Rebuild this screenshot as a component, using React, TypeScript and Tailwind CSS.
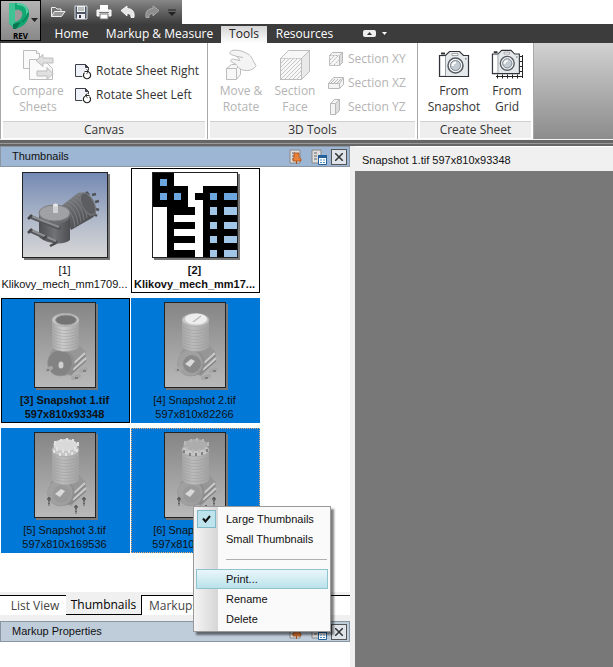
import type { ReactNode } from "react";
import { clsx } from "clsx";

const UI_FONT = "font-['Open_Sans',sans-serif]";
const MS_FONT = "font-['Liberation_Sans',sans-serif]";

/* ---------- Toolbar icons ---------- */

function AppLogo() {
  return (
    <svg width="24" height="28" viewBox="0 0 24 28" className="shrink-0">
      <path d="M2 1h8c8 0 13 5 12 12-1 8-7 13-15 14l-5-6z" fill="#12a873" />
      <path d="M2 1h6v19l-2 5-4-4z" fill="#3fc294" />
      <path d="M6 22l8-2-5 7H6z" fill="#08774f" />
      <path d="M10 2c8 0 11 4 10 11" fill="none" stroke="#55cfa2" strokeWidth="2" />
      <path d="M8 8c6-1 8 2 7 6-1 3-3 5-7 6z" fill="#9b9b9b" />
      <path d="M15 20c4-3 6-6 6-9" fill="none" stroke="#0a8a5d" strokeWidth="2" />
    </svg>
  );
}

function OpenIcon() {
  return (
    <svg width="16" height="14" viewBox="0 0 16 14" stroke="#eee" fill="none">
      <path d="M1.500 11.500v-9h4l1.500 1.500h4v2" fill="#777" />
      <path d="M1.500 11.500l3-5h10.500l-3.500 5z" fill="#999" />
    </svg>
  );
}

function SaveIcon() {
  return (
    <svg width="14" height="15" viewBox="0 0 14 15">
      <path d="M1 1h12v13H1z" fill="#4b5563" stroke="#d8dde2" strokeWidth="1" />
      <path d="M3 1h8v6H3z" fill="#eef0f2" />
      <path d="M4 3h6M4 5h6" stroke="#888" />
      <path d="M3 9h8v5H3z" fill="#eef0f2" />
      <path d="M5 10h2v3H5z" fill="#334" />
    </svg>
  );
}

function PrintIcon() {
  return (
    <svg width="16" height="15" viewBox="0 0 16 15">
      <path d="M4 0h8v5H4z" fill="#fff" />
      <path d="M1 5h14v6H1z" fill="#eee" stroke="#fff" />
      <path d="M3 7.500h10" stroke="#777" />
      <path d="M4 9h8v5H4z" fill="#fff" stroke="#777" />
    </svg>
  );
}

function UndoIcon({ redo = false }: { redo?: boolean }) {
  return (
    <svg width="16" height="14" viewBox="0 0 16 14" className={redo ? "-scale-x-100" : ""}>
      <path
        d="M1 5.500l6-4.500v2.500c5 0 8 3 7 9h-3c0-3-1-4-4-4V11z"
        fill={redo ? "#8d8d8d" : "#e6e6e6"}
        stroke={redo ? "#b5b5b5" : "#fff"}
        strokeWidth=".8"
      />
    </svg>
  );
}

/* ---------- Ribbon icons ---------- */

function CompareIcon() {
  return (
    <svg width="32" height="32" viewBox="0 0 32 32" stroke="#bdbdbd" fill="#fafafa">
      <path d="M1.500 1.500h13l3 3v15h-16z" />
      <path d="M7.500 10.500h14l9 9v11h-23z" />
      <path d="M14 11.500l7-6v3.500h10v5h-10v3.500z" fill="#e0e0e0" />
      <path d="M31 24.500l-6-6v3.500h-10v5h10v3.500z" fill="#e0e0e0" />
      <path d="M14.500 1.500v3h3" />
    </svg>
  );
}

function RotateIcon({ left = false }: { left?: boolean }) {
  return (
    <svg width="17" height="17" viewBox="0 0 17 17" fill="none">
      <path d="M.5 1.500h10l3 3v9h-13z" fill="#eef1f7" stroke="#3c4048" />
      <path d="M10.500 1.500v3h3z" fill="#444" stroke="#3c4048" />
      <circle cx="12" cy="12" r="5" fill="#fff" />
      <g transform={left ? "translate(24 0) scale(-1 1)" : undefined}>
        <path d="M9.500 9.600a3.600 3.600 0 1 0 4.600-.4" stroke="#222" strokeWidth="1.200" />
        <path d="M9.500 8.500h4M11.500 6.500l2.500 2-2.500 2.200" stroke="#222" />
      </g>
    </svg>
  );
}

function MoveRotateIcon() {
  return (
    <svg width="32" height="32" viewBox="0 0 32 32" stroke="#bdbdbd" fill="#f7f7f7">
      <path d="M1.500 19.500l5-4h9v10l-4 5h-10z" />
      <path d="M1.500 19.500h10v11M11.500 19.500l4-4" />
      <path
        d="M7 1.500c4-1 9 0 13 2 5 2 7 5 8 8l3 5c-2 4-6 5-10 5-5 0-8-3-10-6l-5-3c-1-2 1-3 4-2l5 1-3-4-6-2c-2-1-1-3 1-4z"
        fill="#f4f4f4"
      />
      <path d="M12 7.500l6 1" />
    </svg>
  );
}

function SectionFaceIcon() {
  return (
    <svg width="32" height="32" viewBox="0 0 32 32" stroke="#bdbdbd" fill="#f7f7f7">
      <defs>
        <pattern id="hatch" width="4" height="4" patternUnits="userSpaceOnUse">
          <path d="M-1 5l6-6M-1 1l2-2M3 5l2-2" stroke="#c2c2c2" strokeWidth=".9" />
        </pattern>
      </defs>
      <path d="M1.500 9.500l8-8h21v21l-8 8h-21z" />
      <path d="M22.500 9.500l8-8v21l-8 8z" fill="#e9e9e9" />
      <path d="M1.500 9.500h21v21h-21z" fill="url(#hatch)" strokeDasharray="2 1" />
    </svg>
  );
}

function SectionIcon({ plane }: { plane: string }) {
  return (
    <svg width="16" height="16" viewBox="0 0 16 16" stroke="#b8b8b8" fill="#f4f4f4">
      {plane === "XY" && (
        <>
          <path d="M1.500 4.500l3-3h10v10l-3 3h-10z" />
          <path d="M1.500 4.500h10v10h-10zM2 9l4-4M2 13l8-8M6 14l5-5" strokeDasharray="2 1" />
          <path d="M11.500 4.500l3-3v10l-3 3z" fill="#ddd" />
        </>
      )}
      {plane === "XZ" && (
        <>
          <path d="M.5 8.500l5-6h10v7l-4 4h-11z" />
          <path d="M.5 8.500h11v5M11.500 8.500l4-6M3 8l4-4M6 8l4-4M9 8l4-4" />
        </>
      )}
      {plane === "YZ" && (
        <>
          <path d="M2.500 4.500l4-4h5v11l-4 4h-5z" />
          <path d="M2.500 4.500h5v11M7.500 4.500l4-4M8 9l3-3M8 12l3-3" />
          <path d="M7.500 4.500l4-4v11l-4 4z" fill="#ddd" />
        </>
      )}
    </svg>
  );
}

function CameraIcon({ grid = false }: { grid?: boolean }) {
  return (
    <svg width="32" height="32" viewBox="0 0 32 32" fill="none">
      <g transform={grid ? "translate(0 -1) scale(.93)" : undefined}>
        <path d="M3 3.500h4v2H3z" fill="#333" />
        <path d="M1.500 6.500h6l4-4h10l4 4h5v21h-29z" fill="#e6e9ec" stroke="#30343a" strokeWidth="1.200" />
        <path d="M3 8h4v18H3z" fill="#fff" />
        <path d="M7.500 7v20" stroke="#9aa0a6" />
        <path d="M14 4.500h6v2h-6z" fill="#fff" stroke="#888" strokeWidth=".7" />
        <circle cx="17.500" cy="16.500" r="7.500" fill="#f5f6f7" stroke="#555b63" strokeWidth="1.500" />
        <circle cx="17.500" cy="16.500" r="5" fill="#c3ccd4" stroke="#7a828a" />
        <path d="M14.500 17a3.500 3.500 0 0 1 3.500-3.500" stroke="#fff" strokeWidth="2" />
        <path d="M27 9h1.500v1.500H27z" fill="#888" />
      </g>
      {grid && (
        <path
          d="M5 27.500h27M31.500 6v23M6.500 25.500v4M11.500 25.500v4M16.500 25.500v4M21.500 25.500v4M26.500 25.500v4M29 7.500h3M29 12.500h3M29 17.500h3M29 22.500h3"
          stroke="#222"
        />
      )}
    </svg>
  );
}

/* ---------- Dock header icons ---------- */

function PinIcon() {
  return (
    <svg width="14" height="16" viewBox="0 0 14 16">
      <path d="M1 1h10v13H1z" fill="#ddd" stroke="#888" />
      <path d="M3 4h3M3 7h2M3 10h2" stroke="#666" />
      <path d="M5 4h5v4l2 2v2H4v-2l1-2z" fill="#e8813a" stroke="#a84e18" strokeWidth=".8" />
      <path d="M7.500 12v3" stroke="#a84e18" />
    </svg>
  );
}

function ListIcon() {
  return (
    <svg width="16" height="16" viewBox="0 0 16 16">
      <path d="M1 1h9v13H1z" fill="#ddd" stroke="#888" />
      <path d="M3 4h3M3 7h3M3 10h3" stroke="#666" />
      <path d="M7.500 6.500h8v9h-8z" fill="#fff" stroke="#22619c" />
      <path d="M7 6h9v3H7z" fill="#22619c" />
      <path d="M9 11h2M9 13.500h2M12 11h2M12 13.500h2" stroke="#4d8cc4" />
    </svg>
  );
}

/* ---------- Thumbnail artwork ---------- */

function EngineArt() {
  return (
    <svg width="84" height="84" viewBox="0 0 84 84" className="block">
      <defs>
        <linearGradient id="sky" x1="0" y1="0" x2="0" y2="1">
          <stop offset="0" stopColor="#7489b3" />
          <stop offset=".6" stopColor="#b4bccb" />
          <stop offset="1" stopColor="#d6d6d6" />
        </linearGradient>
        <linearGradient id="barrel" x1="0" y1="0" x2=".6" y2="1">
          <stop offset="0" stopColor="#85878a" />
          <stop offset=".5" stopColor="#66686b" />
          <stop offset="1" stopColor="#494b4e" />
        </linearGradient>
        <linearGradient id="drum" x1="0" y1="0" x2="1" y2="0">
          <stop offset="0" stopColor="#4c4e51" />
          <stop offset=".5" stopColor="#707276" />
          <stop offset="1" stopColor="#4c4e51" />
        </linearGradient>
      </defs>
      <path d="M0 0h84v84H0z" fill="url(#sky)" />
      {/* finned barrel */}
      <path d="M63 19l3 3M69 22l4-1M72 29l4-1M73 36l3 1M71 41l3 2" stroke="#505255" strokeWidth="2.500" />
      <path d="M37 34l18-14c9-3 17 6 18 18 0 3-1 5-4 7l-21 12z" fill="url(#barrel)" />
      {[0, 3, 6, 9, 12, 15, 18].map((d) => (
        <path
          key={d}
          d={`M${39 + d} ${33 - d * 0.75}c7 2 12 10 13 21`}
          fill="none"
          stroke="#8f9194"
          strokeWidth=".6"
        />
      ))}
      <ellipse cx="65" cy="31" rx="6" ry="12" transform="rotate(-27 65 31)" fill="#5b5d60" stroke="#77797c" />
      {/* crank housing */}
      <path d="M16 41h31v26c-5 5-22 5-31-3z" fill="url(#drum)" />
      <ellipse cx="31.500" cy="43" rx="15.500" ry="8" fill="#6a6c6f" />
      <ellipse cx="31.500" cy="40" rx="15.500" ry="8" fill="#a0a1a4" stroke="#7b7d80" />
      <path d="M30 32h5v8h-5z" fill="#cfd0d2" />
      <ellipse cx="32.500" cy="32" rx="2.500" ry="1.500" fill="#e8e8e8" />
      {/* mounting arms */}
      <path d="M8 44l28 11M8 58l25 11" stroke="#54565a" strokeWidth="4" strokeLinecap="round" />
      <path d="M8 43l28 11M8 57l25 11" stroke="#8c8e91" strokeWidth="2" />
      <path d="M5 46l4-4M5 60l4-4M27 73l6-3M20 66l4-3" stroke="#46484b" strokeWidth="2.500" />
    </svg>
  );
}

function PlanArt() {
  return (
    <svg width="84" height="84" viewBox="0 0 84 84" className="block" shapeRendering="crispEdges">
      <path d="M0 0h84v84H0z" fill="#fff" />
      <path
        d="M0 0h21v34H0zM20 13h15v21H20zM14 34h28v8H14zM14 34h7v50h-7zM20 49h22v7H20zM20 63h22v7H20zM20 77h22v7H20zM42 20h8v7h-8zM50 13h34v71H50z"
        fill="#000"
      />
      <path d="M7 6h7v7H7zM7 20h7v7H7zM21 20h7v7h-7zM57 20h7v7h-7zM71 20h13v7H71z" fill="#6ca6df" />
      <path
        d="M57 34h7v8h-7zM71 34h13v8H71zM57 49h7v7h-7zM71 49h13v7H71zM57 63h7v7h-7zM71 63h13v7H71zM57 77h7v7h-7zM71 77h13v7H71z"
        fill="#a1c6e7"
      />
    </svg>
  );
}

type Top = "open" | "piston" | "exploded" | "bolted";

function PumpArt({ top }: { top: Top }) {
  const bolts = top === "exploded" || top === "bolted";
  return (
    <svg width="60" height="84" viewBox="0 0 60 84" className="block">
      <defs>
        <linearGradient id={`bg-${top}`} x1="0" y1="0" x2="0" y2="1">
          <stop offset="0" stopColor="#858585" />
          <stop offset="1" stopColor="#b9b9b9" />
        </linearGradient>
        <linearGradient id={`cyl-${top}`} x1="0" y1="0" x2="1" y2="0">
          <stop offset="0" stopColor="#a6a6a6" />
          <stop offset=".4" stopColor={top === "open" ? "#cdcdcd" : "#bcbcbc"} />
          <stop offset="1" stopColor="#a2a2a2" />
        </linearGradient>
      </defs>
      <path d="M0 0h60v84H0z" fill={`url(#bg-${top})`} />
      {/* crankcase */}
      <path d="M15 50l4-5 25-3 7 7v9L36 73l-10-4z" fill="#969696" />
      <path d="M37 62l13-12M38 67l13-12" stroke="#cbcbcb" strokeWidth="1.800" />
      <path d="M37 64.500l13-12M35 71l16-13" stroke="#7f7f7f" />
      <ellipse cx="27" cy="60" rx="12.500" ry="13" fill="#8d8d8d" />
      <ellipse cx="25" cy="60" rx="12.500" ry="13" fill={top === "open" ? "#838383" : "#a0a0a0"} stroke="#999" strokeWidth=".7" />
      {top === "open" ? (
        <ellipse cx="26" cy="62" rx="2.500" ry="3.500" fill="#cfcfcf" />
      ) : (
        <>
          <ellipse cx="27" cy="61" rx="9" ry="9" fill={bolts ? "#999" : "#8a8a8a"} />
          <path d="M20 61l6-5 4 2-5 6z" fill="#d9d9d9" />
        </>
      )}
      {/* cylinder */}
      <path d={`M17 ${bolts ? 20 : 17}h27v27c-4 6-23 6-27 0z`} fill={`url(#cyl-${top})`} />
      {[23, 26, 29, 32, 35, 38, 41, 44].map((y) => (
        <path key={y} d={`M17 ${y}c4 6 23 6 27 0`} fill="none" stroke="#9a9a9a" strokeWidth=".5" />
      ))}
      <ellipse cx="30.500" cy="17" rx="13.500" ry="6.500" fill="#c6c6c6" stroke="#adadad" />
      {top === "open" && <ellipse cx="31" cy="17" rx="10.500" ry="5" fill="#747474" stroke="#999" />}
      {top === "piston" && (
        <>
          <ellipse cx="31" cy="16" rx="11" ry="5.500" fill="#ededed" />
          <path d="M28 19l8-6" stroke="#bbb" strokeWidth="1.500" />
        </>
      )}
      {bolts && (
        <>
          <ellipse cx="30.500" cy="12" rx="12" ry="6" fill={top === "exploded" ? "#d9d9d9" : "#adadad"} />
          <path
            d="M20 8v4M26 6v3M32 5v3M38 6v3M43 9v4M22 14v4M28 16v4M34 16v4M40 14v4"
            stroke={top === "exploded" ? "#e2e2e2" : "#b8b8b8"}
            strokeWidth="2"
          />
          <path d="M19 17v3M25 20v3M31 20v3M37 19v3M42 16v3" stroke={top === "exploded" ? "#eee" : "#6e6e6e"} strokeWidth="1.500" />
          <path d="M14 64v9M41 72v9M49 64v9" stroke="#5a5a5a" strokeWidth="1.800" strokeDasharray="2 .8" />
          <path d="M12 66h4M39 74h4M47 66h4" stroke="#5a5a5a" strokeWidth="1.500" />
        </>
      )}
      {!bolts && (
        <>
          <path d="M12 67l4-2M38 75l6-2M46 68l5-2" stroke="#a6a6a6" strokeWidth="4" strokeLinecap="round" />
          <path d="M40 75h3M48 68h3M12 67h2" stroke="#555" />
        </>
      )}
    </svg>
  );
}

/* ---------- Ribbon ---------- */

type LargeButtonProps = { icon: ReactNode; lines: [string, string]; disabled?: boolean; className?: string };

function LargeButton({ icon, lines, disabled, className }: LargeButtonProps) {
  return (
    <button
      disabled={disabled}
      className={clsx(
        "flex flex-col items-center pt-1.5 leading-4",
        disabled ? "text-[#b4b4b4]" : "text-[#333]",
        className
      )}
    >
      {icon}
      <span className="mt-0.5">{lines[0]}</span>
      <span>{lines[1]}</span>
    </button>
  );
}

function RibbonPanel({ title, className, children }: { title: string; className?: string; children: ReactNode }) {
  return (
    <section className={clsx("flex h-24 flex-col border-r border-[#a8a8a8] bg-white", className)}>
      <div className="flex min-h-0 flex-1">{children}</div>
      <h2 className="mx-0.5 mb-px h-[17px] border-t border-[#d0d0d0] bg-[#eee] text-center leading-4 text-[#333]">
        {title}
      </h2>
    </section>
  );
}

function Ribbon() {
  return (
    <header className={clsx("text-xs", UI_FONT)}>
      <div className="relative">
        <div className="flex h-6 w-[182px] items-center gap-2 bg-linear-to-b from-[#888] to-[#3e3e3e] pl-[50px]">
          <button aria-label="Open"><OpenIcon /></button>
          <button aria-label="Save"><SaveIcon /></button>
          <button aria-label="Print"><PrintIcon /></button>
          <button aria-label="Undo"><UndoIcon /></button>
          <button aria-label="Redo"><UndoIcon redo /></button>
          <button aria-label="Customize">
            <svg width="8" height="7" viewBox="0 0 8 7">
              <path d="M0 1h8" stroke="#222" />
              <path d="M0 3h8L4 7z" fill="#222" />
            </svg>
          </button>
        </div>
        <button
          aria-label="Application menu"
          className="absolute top-0 left-0 flex h-[41px] w-[41px] flex-col border border-black bg-linear-to-b from-[#b4b4b4] to-[#888]"
        >
          <span className="flex h-[30px] items-center pl-1.5">
            <AppLogo />
            <svg width="7" height="4" viewBox="0 0 7 4" className="mt-2 shrink-0">
              <path d="M0 0h7L3.500 4z" fill="#222" />
            </svg>
          </span>
          <span className="w-full text-center text-[8px] leading-[9px] font-bold text-black">REV</span>
        </button>
        <nav className="flex h-[19px] items-stretch bg-[#3c3c3c] pl-[45px] leading-5 text-white">
          <a href="#home" className="w-[53px] text-center">Home</a>
          <a href="#markup" className="w-[123px] text-center">Markup &amp; Measure</a>
          <a href="#tools" className="mt-0.5 w-[46px] bg-linear-to-b from-[#d4d4d4] to-white text-center leading-4 text-[#222]">
            Tools
          </a>
          <a href="#resources" className="w-[75px] text-center">Resources</a>
          <button aria-label="Minimize ribbon" className="ml-[21px] flex items-center gap-1.5">
            <svg width="13" height="7" viewBox="0 0 13 7">
              <rect width="13" height="7" rx="2" fill="#eee" />
              <path d="M4 5l2.500-3L9 5z" fill="#333" />
            </svg>
            <svg width="5" height="3" viewBox="0 0 5 3"><path d="M0 0h5L2.500 3z" fill="#fff" /></svg>
          </button>
        </nav>
      </div>

      <div className="flex bg-linear-to-b from-[#d2d2d2] to-[#8c8c8c]">
        <RibbonPanel title="Canvas" className="w-[208px] border-l">
          <LargeButton disabled icon={<CompareIcon />} lines={["Compare", "Sheets"]} className="ml-1.5 w-[62px]" />
          <div className="ml-1.5 flex flex-col pt-4 text-[#333]">
            <button className="flex h-6 items-center gap-1"><RotateIcon />Rotate Sheet Right</button>
            <button className="flex h-6 items-center gap-1"><RotateIcon left />Rotate Sheet Left</button>
          </div>
        </RibbonPanel>
        <RibbonPanel title="3D Tools" className="w-[210px]">
          <LargeButton disabled icon={<MoveRotateIcon />} lines={["Move &", "Rotate"]} className="ml-1.5 w-[54px]" />
          <LargeButton disabled icon={<SectionFaceIcon />} lines={["Section", "Face"]} className="w-[54px]" />
          <div className="ml-1.5 flex flex-col pt-1">
            {["XY", "XZ", "YZ"].map((plane) => (
              <button key={plane} disabled className="flex h-6 items-center gap-1 text-[#b4b4b4]">
                <SectionIcon plane={plane} />
                Section {plane}
              </button>
            ))}
          </div>
        </RibbonPanel>
        <RibbonPanel title="Create Sheet" className="w-[116px]">
          <LargeButton icon={<CameraIcon />} lines={["From", "Snapshot"]} className="ml-1.5 w-[60px]" />
          <LargeButton icon={<CameraIcon grid />} lines={["From", "Grid"]} className="w-[46px]" />
        </RibbonPanel>
      </div>
      <div className="h-[7px] border-t border-[#f4f4f4] bg-[#666] pt-[3px]">
        <div className="h-px bg-[#9a9a9a]" />
      </div>
    </header>
  );
}

/* ---------- Left dock ---------- */

function DockHeader({ title, dim }: { title: string; dim?: boolean }) {
  return (
    <div
      className={clsx(
        "flex h-[21px] shrink-0 items-center border border-[#8c96a3] pr-0.5 pl-[11px] text-[#111]",
        dim ? "bg-[#bfccda]" : "bg-[#9db6d4]"
      )}
    >
      <h2 className="flex-1">{title}</h2>
      <button aria-label="Pin" className="mr-2"><PinIcon /></button>
      <button aria-label="Options" className="mr-1"><ListIcon /></button>
      <button aria-label="Close" className="flex h-4 w-4 items-center justify-center border border-[#555] bg-[#dfe4ea]">
        <svg width="8" height="8" viewBox="0 0 8 8"><path d="M0 0l8 8M8 0L0 8" stroke="#333" strokeWidth="1.500" /></svg>
      </button>
    </div>
  );
}

type Thumb = { line1: string; line2: string; art: ReactNode; style: string; bold?: boolean; menu?: boolean };

const THUMBS: Thumb[] = [
  { line1: "[1]", line2: "Klikovy_mech_mm1709...", art: <EngineArt />, style: "border-transparent" },
  { line1: "[2]", line2: "Klikovy_mech_mm17...", art: <PlanArt />, style: "border-black", bold: true },
  { line1: "[3] Snapshot 1.tif", line2: "597x810x93348", art: <PumpArt top="open" />, style: "border-black bg-[#0078d7]", bold: true },
  { line1: "[4] Snapshot 2.tif", line2: "597x810x82266", art: <PumpArt top="piston" />, style: "border-[#0078d7] bg-[#0078d7]" },
  { line1: "[5] Snapshot 3.tif", line2: "597x810x169536", art: <PumpArt top="exploded" />, style: "border-[#0078d7] bg-[#0078d7]" },
  { line1: "[6] Snapshot 4.tif", line2: "597x810x169536", art: <PumpArt top="bolted" />, style: "border-dotted border-[#dfa878] bg-[#0078d7]", menu: true },
];

function MenuItem({ label, checked, active }: { label: string; checked?: boolean; active?: boolean }) {
  return (
    <button
      role="menuitem"
      className={clsx(
        "flex h-5 w-full items-center border text-left",
        active ? "border-[#8fc3cf] bg-linear-to-b from-[#e9f6f9] via-[#d3edf3] to-[#b9e1ea]" : "border-transparent"
      )}
    >
      <span
        className={clsx(
          "mr-2.5 flex h-[18px] w-[19px] items-center justify-center",
          checked && "border border-[#7fb9c9] bg-[#bfe3ec]"
        )}
      >
        {checked && (
          <svg width="9" height="8" viewBox="0 0 9 8">
            <path d="M1 3.500l2.500 3L8 1" fill="none" stroke="#111" strokeWidth="2" />
          </svg>
        )}
      </span>
      {label}
    </button>
  );
}

function ContextMenu() {
  return (
    <div
      role="menu"
      className="absolute top-[77px] left-[61px] z-10 w-[138px] border border-[#999] bg-[#fafafa] bg-linear-to-r from-[#f4f4f4] to-[#d6d6d6] bg-[length:24px_100%] bg-no-repeat p-0.5 text-[#111] shadow-[3px_3px_2px_rgba(0,0,0,0.5)]"
    >
      <MenuItem label="Large Thumbnails" checked />
      <MenuItem label="Small Thumbnails" />
      <div className="flex h-5 items-center pr-px pl-[30px]">
        <hr className="flex-1 border-[#b0b0b0]" />
      </div>
      <MenuItem label="Print..." active />
      <MenuItem label="Rename" />
      <MenuItem label="Delete" />
    </div>
  );
}

function ThumbnailGrid() {
  return (
    <ul className="grid flex-1 grid-cols-[129px_129px] content-start gap-x-px gap-y-[5px] pt-px pl-px">
      {THUMBS.map((t) => (
        <li key={t.line1} className={clsx("relative flex h-[125px] flex-col items-center border pt-[3px] pr-0.5", t.style)}>
          <div className="border border-[#222] shadow-[2px_2px_0_#777]">{t.art}</div>
          <p className={clsx("mt-[5px] text-center leading-[14px] whitespace-nowrap text-[#111]", t.bold && "font-bold")}>
            {t.line1}
            <br />
            {t.line2}
          </p>
          {t.menu && <ContextMenu />}
        </li>
      ))}
    </ul>
  );
}

function DockTabs() {
  return (
    <div role="tablist" className={clsx("flex h-[29px] shrink-0 items-start bg-[#f0f0f0] pt-[3px] text-xs text-[#444]", UI_FONT)}>
      <button role="tab" className="h-5 w-[66px] border-t border-black bg-white pl-1 leading-5">List View</button>
      <button role="tab" aria-selected className="h-5 w-[76px] border-r border-b border-black leading-5 text-black">
        Thumbnails
      </button>
      <button role="tab" className="h-5 flex-1 border-t border-black bg-white pl-[7px] text-left leading-5">Markups</button>
    </div>
  );
}

export default function App() {
  return (
    <div className="flex h-screen flex-col overflow-hidden bg-white">
      <Ribbon />
      <main className={clsx("flex min-h-0 flex-1 bg-[#f0f0f0] text-[11px]", MS_FONT)}>
        <aside className="flex w-[350px] shrink-0 flex-col bg-white">
          <DockHeader title="Thumbnails" />
          <ThumbnailGrid />
          <DockTabs />
          <DockHeader title="Markup Properties" dim />
          <div className="h-[25px] shrink-0 bg-white" />
        </aside>
        <section className="ml-[5px] flex flex-1 flex-col bg-[#787878]">
          <h1 className="h-[25px] border-t border-white bg-[#f0f0f0] pl-[7px] leading-[26px] text-[#111]">
            Snapshot 1.tif 597x810x93348
          </h1>
        </section>
      </main>
    </div>
  );
}
